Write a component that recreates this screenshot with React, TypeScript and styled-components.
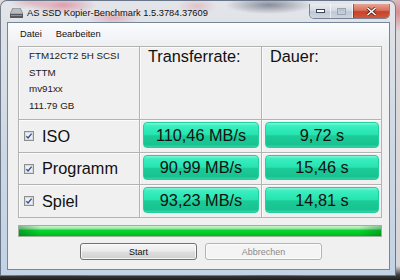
import { Fragment } from 'react';
import styled, { createGlobalStyle } from 'styled-components';

const GlobalStyle = createGlobalStyle`
  html, body { margin: 0; padding: 0; }
  body {
    background: #262626;
    font-family: "Liberation Sans", Arial, sans-serif;
  }
`;

const Desktop = styled.div`
  width: 400px;
  height: 280px;
  overflow: hidden;
  background:
    radial-gradient(ellipse 12px 20px at 398px 12px, rgba(210, 70, 80, 0.55), transparent),
    linear-gradient(to bottom, #dedadc 0, #d6d5d9 266px, #3c3c3c 275px, #1e1e1e 280px);
`;

const Window = styled.div`
  width: 396px;
  height: 276px;
  box-sizing: border-box;
  padding: 0 5px 5px 6px;
  display: flex;
  flex-direction: column;
  border: 1px solid rgba(45, 55, 75, 0.6);
  border-radius: 7px 7px 0 0;
  background:
    radial-gradient(ellipse 34px 9px at 62px 4px, rgba(215, 70, 95, 0.45), transparent),
    radial-gradient(ellipse 26px 8px at 112px 17px, rgba(215, 80, 100, 0.35), transparent),
    radial-gradient(ellipse 22px 7px at 30px 1px, rgba(215, 80, 100, 0.3), transparent),
    radial-gradient(ellipse 44px 9px at 268px 4px, rgba(60, 70, 90, 0.55), transparent),
    radial-gradient(ellipse 20px 8px at 196px 5px, rgba(220, 90, 110, 0.25), transparent),
    linear-gradient(to bottom, #e4e5e9 0, #dde2e8 30px, #cbd7e4 160px, #c2d3e5 100%);
`;

const TitleBar = styled.div`
  height: 21px;
  display: flex;
  align-items: flex-start;
  padding-left: 3px;
`;

const TitleText = styled.div`
  height: 21px;
  display: flex;
  align-items: center;
  gap: 4px;
  font-size: 9.3px;
  color: #111;
  padding-top: 1px;
`;

const Controls = styled.div`
  margin-left: auto;
  margin-top: 3px;
  display: flex;
  height: 15px;
  border: 1px solid rgba(40, 50, 70, 0.55);
  border-top: none;
  border-radius: 0 0 5px 5px;
  overflow: hidden;
  box-sizing: border-box;
`;

const CtrlButton = styled.div<{ $close?: boolean; $w: number }>`
  width: ${(p) => p.$w}px;
  height: 100%;
  display: flex;
  align-items: center;
  justify-content: center;
  border-left: ${(p) => (p.$close ? '1px solid rgba(80,30,20,.5)' : 'none')};
  border-right: ${(p) => (p.$close ? 'none' : '1px solid rgba(255,255,255,.6)')};
  background: ${(p) =>
    p.$close
      ? 'linear-gradient(to bottom, #e7a594 0, #d9705c 45%, #c7422a 55%, #d0583a 100%)'
      : 'linear-gradient(to bottom, #e9edf2 0, #d5dbe3 45%, #bfc9d6 55%, #cbd6e3 100%)'};
`;

const Client = styled.div`
  flex: 1;
  display: flex;
  flex-direction: column;
  background: #f0f0f0;
  border: 1px solid #75869a;
`;

const MenuBar = styled.div`
  height: 21px;
  display: flex;
  align-items: center;
  padding-left: 12px;
  gap: 14px;
  font-size: 9.3px;
  color: #111;
  background: linear-gradient(to bottom, #fbfcfd 0, #f3f5f8 60%, #eef0f4 100%);
`;

const Content = styled.div`
  padding: 2px 0 0 10px;
  display: flex;
  flex-direction: column;
`;

const Table = styled.div`
  width: 362px;
  display: grid;
  grid-template-columns: 120px 121px 1fr;
  grid-template-rows: 72px 32px 31px 32px;
  gap: 1px;
  background: #b3b3b3;
  border: 1px solid #b3b3b3;
`;

const Cell = styled.div`
  background: #f0f0f0;
  box-shadow: inset 1px 1px 0 #fbfbfb;
`;

const InfoCell = styled(Cell)`
  padding: 1px 0 0 10px;
  font-size: 9.8px;
  line-height: 16.7px;
  color: #1a1a1a;
`;

const HeadCell = styled(Cell)`
  padding: 0 0 0 8px;
  font-size: 16.3px;
  line-height: 18px;
  color: #111;
`;

const LabelCell = styled(Cell)`
  display: flex;
  align-items: center;
  gap: 8px;
  padding-left: 5px;
  font-size: 16.3px;
  color: #111;
`;

const ValueCell = styled(Cell)`
  padding: 2px 2px 4px 3px;
  display: flex;
`;

const Badge = styled.div`
  flex: 1;
  display: flex;
  align-items: center;
  justify-content: center;
  border-radius: 4px;
  border: 1px solid #25cf9d;
  font-size: 16.3px;
  color: #111;
  background: linear-gradient(
    to bottom,
    #7ff7d8 0,
    #3aeec0 12%,
    #26e4b0 48%,
    #1ccb98 54%,
    #17c391 90%,
    #3ad3a6 100%
  );
`;

const Progress = styled.div`
  margin-top: 7px;
  width: 364px;
  height: 12px;
  box-sizing: border-box;
  border: 1px solid #9eb09e;
  background:
    linear-gradient(to right, rgba(0, 70, 20, 0.35) 0, rgba(0, 70, 20, 0) 22px),
    linear-gradient(to right, rgba(0, 70, 20, 0) 340px, rgba(0, 70, 20, 0.3) 100%),
    linear-gradient(to bottom, #cdf6cd 0, #8deb9a 28%, #0ad535 42%, #02cc24 70%, #00b81b 100%);
`;

const ButtonRow = styled.div`
  margin-top: 6px;
  padding-left: 62px;
  display: flex;
  gap: 8px;
`;

const Button = styled.div<{ $disabled?: boolean }>`
  width: 117px;
  height: 17px;
  box-sizing: border-box;
  display: flex;
  align-items: center;
  justify-content: center;
  border-radius: 3px;
  font-size: 9px;
  border: 1px solid ${(p) => (p.$disabled ? '#b1b5b8' : '#707070')};
  color: ${(p) => (p.$disabled ? '#8a8a8a' : '#111')};
  background: ${(p) =>
    p.$disabled
      ? '#f4f4f4'
      : 'linear-gradient(to bottom, #f4f4f4 0, #ececec 48%, #dedede 52%, #d1d1d1 100%)'};
  box-shadow: inset 0 0 0 1px rgba(255, 255, 255, 0.75);
`;

const DriveIcon = () => (
  <svg width="13" height="10" viewBox="0 0 13 10">
    <polygon points="3,0 10,0 13,6 0,6" fill="#b9bcc0" stroke="#7a7d82" strokeWidth="0.8" />
    <rect x="0" y="6" width="13" height="4" fill="#55585d" />
    <rect x="1" y="7" width="11" height="1" fill="#8b8e93" />
  </svg>
);

const CheckBox = () => (
  <svg width="10" height="10" viewBox="0 0 10 10">
    <rect x="0.5" y="0.5" width="9" height="9" fill="#eef0f3" stroke="#8e8f8f" />
    <rect x="1.5" y="1.5" width="7" height="7" fill="none" stroke="#d6d9de" />
    <path d="M2.4 5.2 L4.1 7 L7.6 2.6" fill="none" stroke="#3b4f8e" strokeWidth="1.4" />
  </svg>
);

const rows = [
  { name: 'ISO', rate: '110,46 MB/s', time: '9,72 s' },
  { name: 'Programm', rate: '90,99 MB/s', time: '15,46 s' },
  { name: 'Spiel', rate: '93,23 MB/s', time: '14,81 s' },
];

export default function App() {
  return (
    <Desktop>
      <GlobalStyle />
      <Window>
        <TitleBar>
          <TitleText>
            <DriveIcon />
            AS SSD Kopier-Benchmark 1.5.3784.37609
          </TitleText>
          <Controls>
            <CtrlButton $w={20}>
              <svg width="9" height="4" viewBox="0 0 9 4">
                <rect x="0.5" y="0.5" width="8" height="3" fill="#fff" stroke="#3a4454" />
              </svg>
            </CtrlButton>
            <CtrlButton $w={21}>
              <svg width="9" height="7" viewBox="0 0 9 7">
                <rect x="0.5" y="0.5" width="8" height="6" fill="none" stroke="#9aa5b3" />
                <rect x="1.5" y="1.5" width="6" height="1" fill="#9aa5b3" />
              </svg>
            </CtrlButton>
            <CtrlButton $w={35} $close>
              <svg width="11" height="9" viewBox="0 0 11 9">
                <path d="M1.5 1 L9.5 8 M9.5 1 L1.5 8" stroke="#5a1c10" strokeWidth="3" />
                <path d="M1.5 1 L9.5 8 M9.5 1 L1.5 8" stroke="#fff" strokeWidth="1.6" />
              </svg>
            </CtrlButton>
          </Controls>
        </TitleBar>
        <Client>
          <MenuBar>
            <span>Datei</span>
            <span>Bearbeiten</span>
          </MenuBar>
          <Content>
            <Table>
              <InfoCell>
                FTM12CT2 5H SCSI
                <br />
                STTM
                <br />
                mv91xx
                <br />
                111.79 GB
              </InfoCell>
              <HeadCell>Transferrate:</HeadCell>
              <HeadCell>Dauer:</HeadCell>
              {rows.map((r) => (
                <Fragment key={r.name}>
                  <LabelCell>
                    <CheckBox />
                    {r.name}
                  </LabelCell>
                  <ValueCell>
                    <Badge>{r.rate}</Badge>
                  </ValueCell>
                  <ValueCell>
                    <Badge>{r.time}</Badge>
                  </ValueCell>
                </Fragment>
              ))}
            </Table>
            <Progress />
            <ButtonRow>
              <Button>Start</Button>
              <Button $disabled>Abbrechen</Button>
            </ButtonRow>
          </Content>
        </Client>
      </Window>
    </Desktop>
  );
}
